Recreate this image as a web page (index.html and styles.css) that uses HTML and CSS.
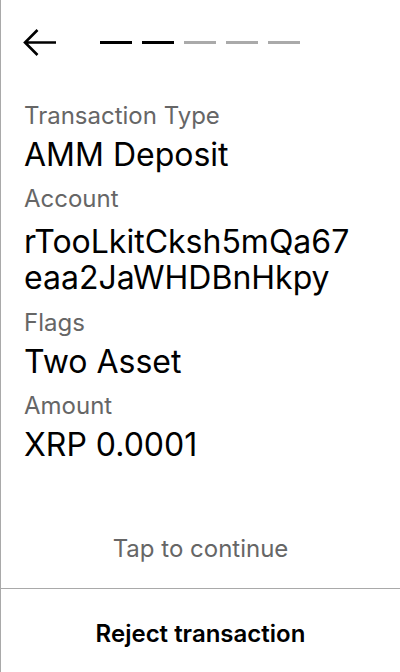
FILE: index.html
```html
<!DOCTYPE html>
<html lang="en">
<head>
<meta charset="utf-8">
<title>AMM Deposit</title>
<link rel="stylesheet" href="styles.css">
</head>
<body>
<div class="screen">
  <header class="header">
    <svg class="back" width="34" height="30" viewBox="0 0 34 30" aria-hidden="true">
      <path d="M33 14.5 H2 M14.5 2 L2 14.5 L14.5 27" fill="none" stroke="#000" stroke-width="2.6" stroke-linecap="butt" stroke-linejoin="miter"/>
    </svg>
    <div class="steps">
      <span class="step step-done"></span>
      <span class="step step-done"></span>
      <span class="step"></span>
      <span class="step"></span>
      <span class="step"></span>
    </div>
  </header>
  <main class="content">
    <div class="label">Transaction Type</div>
    <div class="value">AMM Deposit</div>
    <div class="label">Account</div>
    <div class="value value-account">rTooLkitCksh5mQa67eaa2JaWHDBnHkpy</div>
    <div class="label">Flags</div>
    <div class="value">Two Asset</div>
    <div class="label">Amount</div>
    <div class="value">XRP 0.0001</div>
  </main>
  <div class="tap">Tap to continue</div>
  <footer class="footer">
    <div class="reject">Reject transaction</div>
  </footer>
</div>
</body>
</html>
```

FILE: styles.css
```css
* { box-sizing: border-box; }
html, body {
  margin: 0;
  padding: 0;
  background: #fff;
}
body {
  font-family: Inter, "Noto Sans", sans-serif;
  color: #000;
}
.screen {
  width: 400px;
  height: 672px;
  border-left: 1px solid #a9a9a9;
  display: flex;
  flex-direction: column;
}
.header {
  display: flex;
  align-items: center;
  padding: 28px 0 0 22px;
  height: 58px;
}
.back {
  display: block;
  flex: none;
}
.steps {
  display: flex;
  gap: 10px;
  margin-left: 43px;
  margin-top: -1px;
}
.step {
  display: block;
  width: 32px;
  height: 3px;
  background: #aaaaaa;
}
.step-done {
  background: #000;
}
.content {
  flex: 1;
  padding: 43px 42px 0 23px;
}
.label {
  font-size: 24px;
  line-height: 29px;
  color: #666;
  margin-bottom: 7px;
}
.value {
  font-size: 32px;
  line-height: 36px;
  margin-bottom: 11px;
}
.value-account {
  word-break: break-all;
  margin-top: 11px;
  margin-bottom: 12px;
}
.tap {
  font-size: 24px;
  line-height: 29px;
  color: #666;
  text-align: center;
  margin-bottom: 25px;
}
.footer {
  flex: none;
  height: 84px;
  border-top: 1px solid #a9a9a9;
  padding-top: 30px;
}
.reject {
  font-size: 24px;
  line-height: 29px;
  font-weight: 600;
  text-align: center;
}
```
